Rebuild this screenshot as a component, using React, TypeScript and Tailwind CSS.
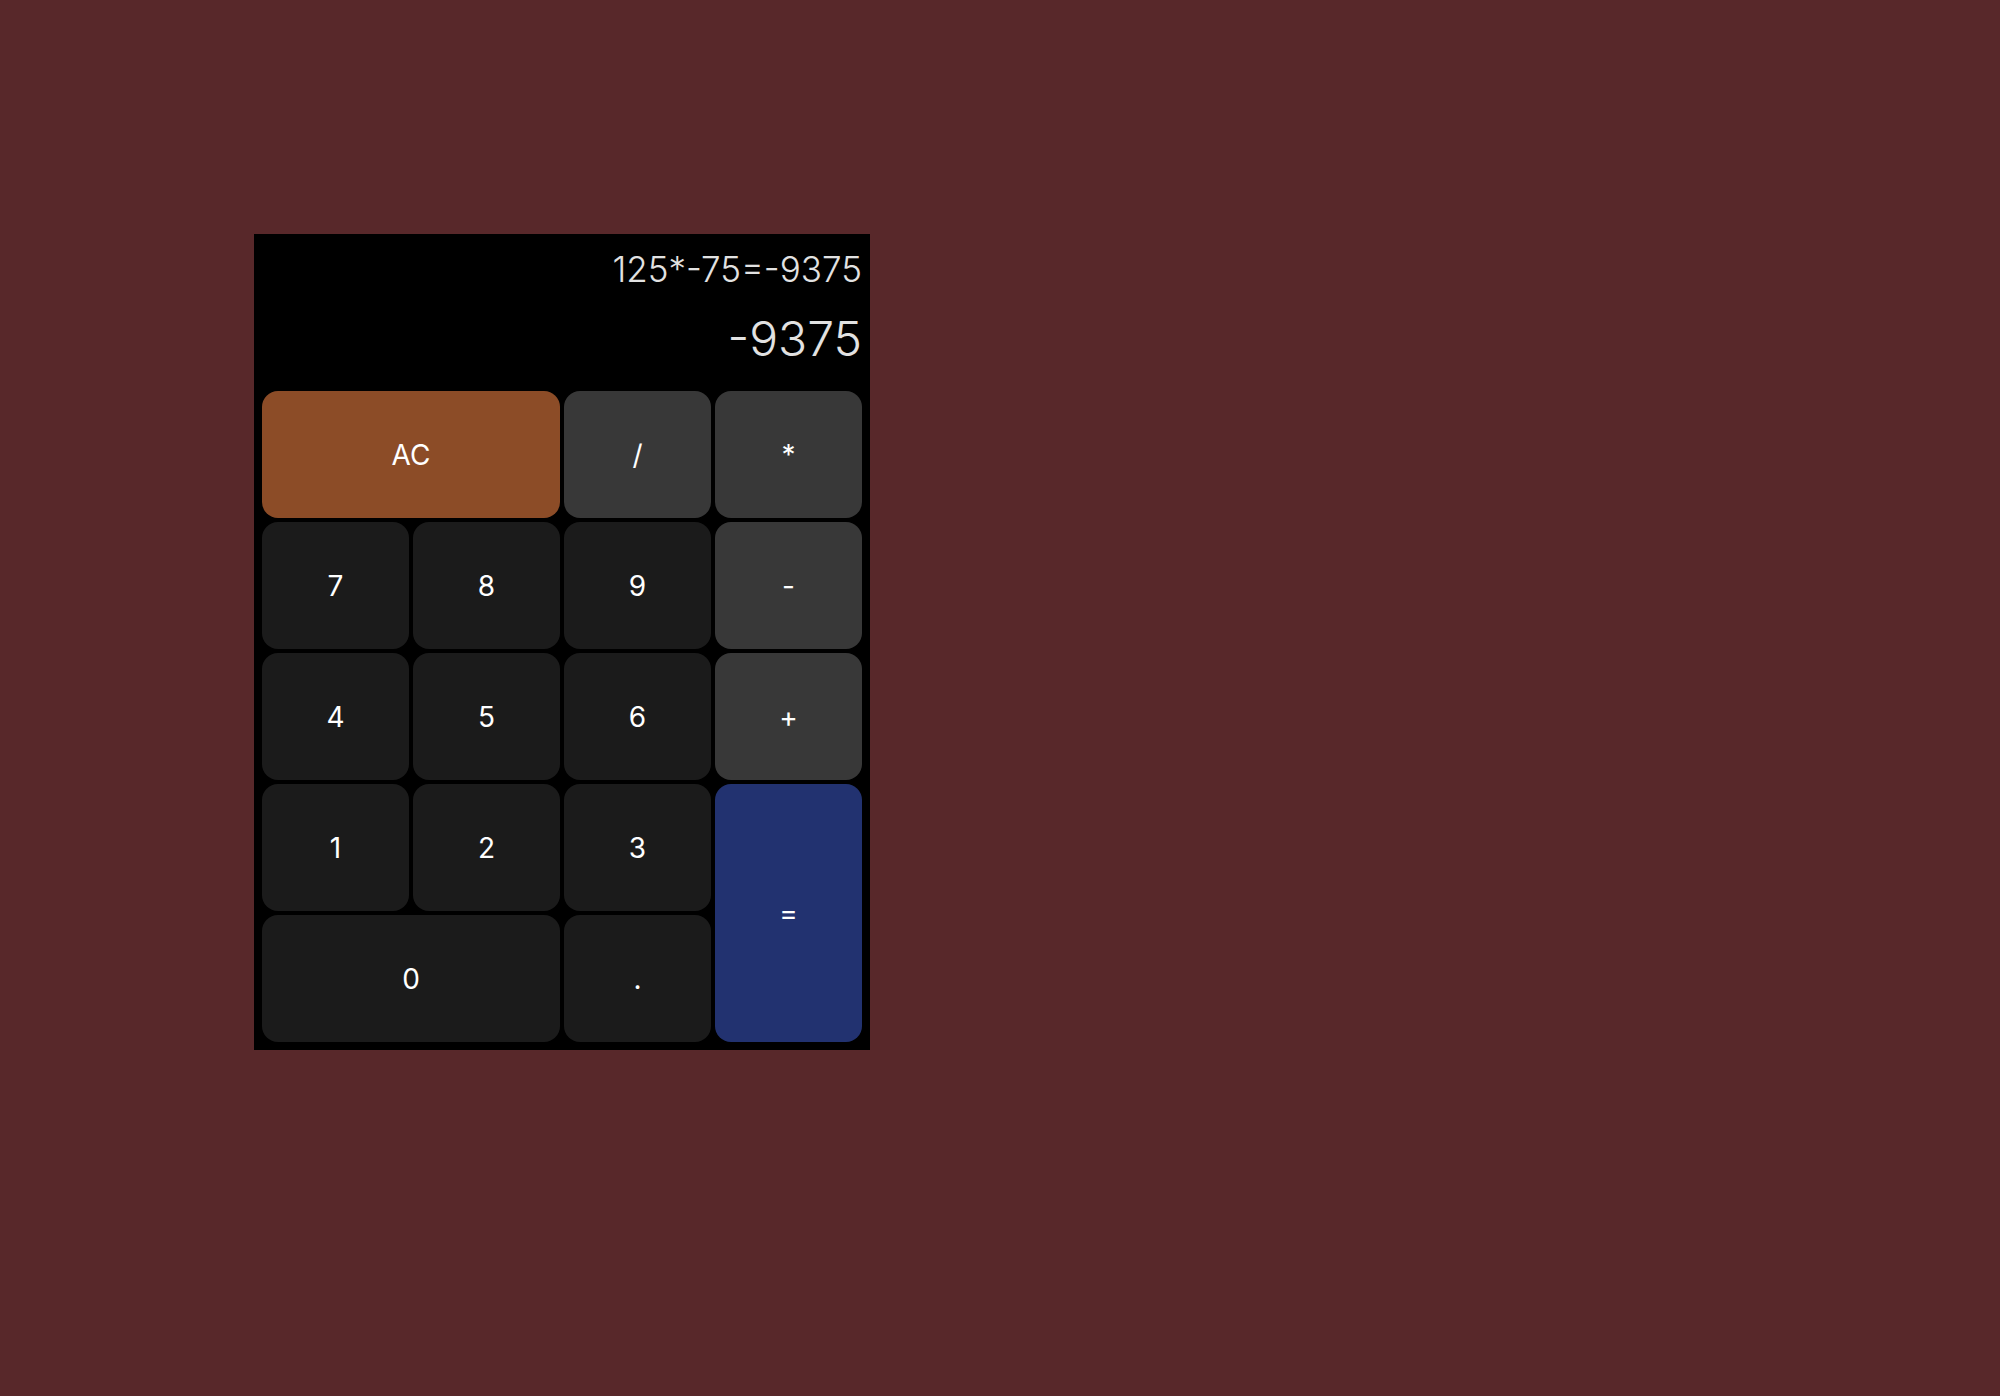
import { useState } from 'react'

type Key = {
  label: string
  kind: 'clear' | 'op' | 'num' | 'eq'
  span?: string
}

const KEYS: Key[] = [
  { label: 'AC', kind: 'clear', span: 'col-span-2' },
  { label: '/', kind: 'op' },
  { label: '*', kind: 'op' },
  { label: '7', kind: 'num' },
  { label: '8', kind: 'num' },
  { label: '9', kind: 'num' },
  { label: '-', kind: 'op' },
  { label: '4', kind: 'num' },
  { label: '5', kind: 'num' },
  { label: '6', kind: 'num' },
  { label: '+', kind: 'op' },
  { label: '1', kind: 'num' },
  { label: '2', kind: 'num' },
  { label: '3', kind: 'num' },
  { label: '=', kind: 'eq', span: 'row-span-2' },
  { label: '0', kind: 'num', span: 'col-span-2' },
  { label: '.', kind: 'num' },
]

const KIND_CLASS: Record<Key['kind'], string> = {
  clear: 'bg-[#8c4c27]',
  op: 'bg-[#383838]',
  num: 'bg-[#1b1b1b]',
  eq: 'bg-[#223270]',
}

export default function App() {
  const [history] = useState('125*-75=-9375')
  const [current] = useState('-9375')

  return (
    <div className="min-h-screen bg-[#58282a] pl-[254px] pt-[234px] font-['Inter',sans-serif]">
      <div className="w-[616px] bg-black p-2">
        {/* дисплей */}
        <div className="flex h-[149px] flex-col items-end font-light text-[#e2e2e2]">
          <div className="mt-[7px] text-[35px] leading-[40px]">{history}</div>
          <div className="mt-[24px] text-[48px] leading-[52px]">{current}</div>
        </div>

        {/* кнопки */}
        <div className="grid grid-cols-4 auto-rows-[127px] gap-1">
          {KEYS.map(k => (
            <button
              key={k.label}
              className={`${KIND_CLASS[k.kind]} ${k.span ?? ''} rounded-2xl text-[28px] text-white`}
            >
              {k.label}
            </button>
          ))}
        </div>
      </div>
    </div>
  )
}
